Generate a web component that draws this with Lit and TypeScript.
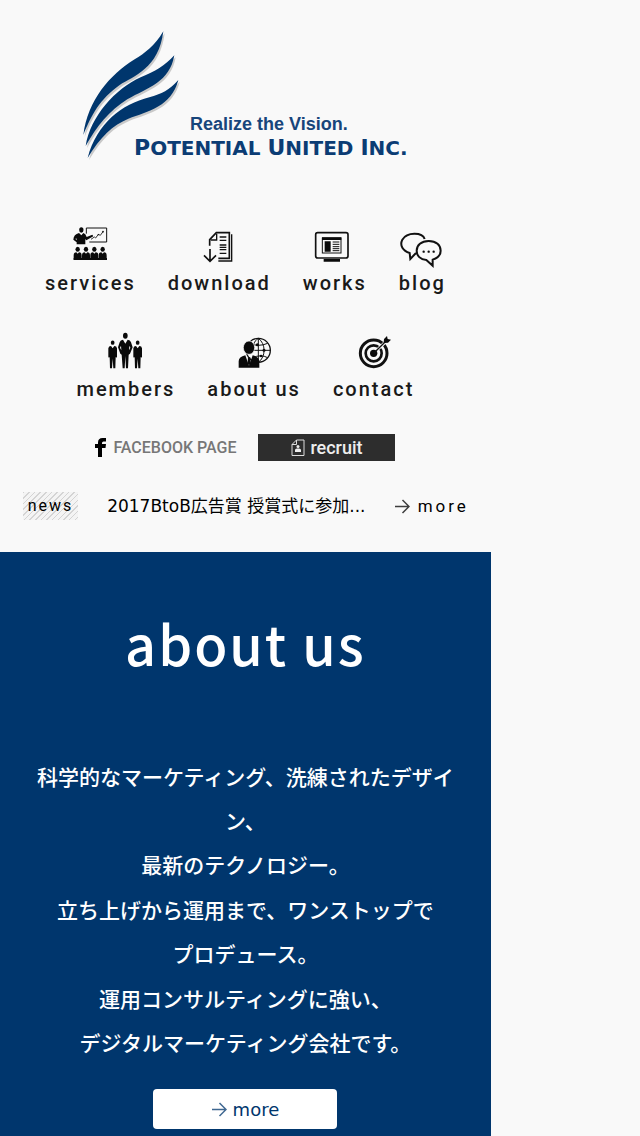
import { LitElement, html, svg, css } from "lit";
import { customElement } from "lit/decorators.js";

const person = (x: number, y: number) => svg`
  <ellipse cx=${x} cy=${y} rx="6.5" ry="7.5" />
  <path d="M${x - 12} ${y + 31} V${y + 19} Q${x - 12} ${y + 9} ${x - 4} ${y + 9} L${x} ${y + 13} L${x + 4} ${y + 9} Q${x + 12} ${y + 9} ${x + 12} ${y + 19} V${y + 31} Z" />`;

const standing = (x: number) => svg`
  <ellipse cx=${x} cy="65" rx="5.5" ry="6.5" />
  <path d="M${x - 5} 75 L${x} 82 L${x + 5} 75 Q${x + 12} 75 ${x + 13} 82 V107 Q${x + 12} 112 ${x + 9} 108 L${x + 8} 142 H${x + 2} L${x} 113 L${x - 2} 142 H${x - 8} L${x - 9} 108 Q${x - 12} 112 ${x - 13} 107 V82 Q${x - 12} 75 ${x - 5} 75 Z" />`;

const blades = svg`
  <path d="M281 34 C255 78 225 100 195 118 C120 165 55 240 41 345 C65 285 90 238 150 195 C190 170 268 145 281 34 Z" />
  <path d="M314 106 C285 137 257 155 213 172 C138 205 62 290 48 378 C82 318 119 272 173 238 C235 203 300 187 314 106 Z" />
  <path d="M326 180 C299 210 276 222 239 232 C157 253 82 309 54 414 C92 350 130 315 176 296 C235 274 305 260 326 180 Z" />`;

const icon = (viewBox: string, body: unknown) => html`
  <svg class="icon" viewBox=${viewBox} aria-hidden="true">${body}</svg>`;

const items = [
  {
    label: "services",
    icon: icon("120 33 126 120", svg`
      <path class="line" stroke-width="3" d="M172 39 H233 V81 H181 M172 39 V56" />
      <path class="line" stroke-width="2.5" d="M186 73 L196 66 L200 69 L208 58 L214 61 L222 50" />
      <circle cx="222" cy="50" r="2.5" /><circle cx="208" cy="59" r="2" />
      <ellipse cx="157" cy="45" rx="6.5" ry="8" />
      <path d="M150 54 L157 61 L163 54 Q170 56 173 66 L190 59 L193 64 L172 76 L169 72 V88 H143 V82 L133 74 Q134 58 150 54 Z M141 68 L140 73 L144 76 Z" fill-rule="evenodd" />
      ${person(146, 103)}${person(171, 103)}${person(196, 103)}${person(221, 103)}
      <path d="M134 129 H234 V135 H134 Z" />`),
  },
  {
    label: "download",
    icon: icon("507 33 126 120", svg`
      <path class="line" stroke-width="5" d="M542 92 V74 L562 53 H601 V130 H568" />
      <path class="line" stroke-width="4" d="M545 75 H563 V56 M608 58 V138 H568" />
      <path class="line" stroke-width="4" d="M572 66 H592 M572 76 H592 M572 90 H592 M572 97 H592 M572 104 H592 M572 115 H592" />
      <path class="line" stroke-width="5" d="M543 102 V137 M525 121 L543 139 L561 121" />`),
  },
  {
    label: "works",
    icon: icon("223 33 126 120", svg`
      <rect class="line" stroke-width="5" x="228" y="53" width="97" height="76" rx="6" />
      <rect class="line" stroke-width="3" x="248" y="69" width="56" height="45" />
      <path d="M247 67 H305 V75 H247 Z M255 79 H273 V110 H255 Z M252 132 H301 V140 H252 Z" />
      <path class="line" stroke-width="3" d="M279 81 H299 M279 88 H299 M279 95 H299 M279 101 H299 M279 107 H299" />`),
  },
  {
    label: "blog",
    icon: icon("484 33 126 120", svg`
      <path class="line" stroke-width="6" d="M555 72 C548 51 502 50 488 74 C479 92 490 108 510 114 L512 132 L529 114" />
      <path class="line" stroke-width="6" d="M567 78 C590 78 603 91 603 107 C603 120 594 129 579 134 L579 152 L560 135 C542 134 531 122 531 107 C531 91 545 78 567 78 Z" />
      <circle cx="552" cy="110" r="3.5" /><circle cx="567" cy="110" r="3.5" /><circle cx="582" cy="110" r="3.5" />`),
  },
  {
    label: "members",
    icon: icon("135 33 126 120", svg`
      ${standing(158)}${standing(233)}
      <ellipse cx="196" cy="44" rx="7" ry="9" />
      <path fill-rule="evenodd" d="M189 56 L196 68 L203 56 Q211 57 213 64 L218 79 L210 98 L206 101 L204 142 H198 L196 105 L194 142 H188 L185 101 L181 98 L174 79 L179 64 Q181 57 189 56 Z M183 74 L180 80 L184 88 Z M208 74 L211 80 L207 88 Z" />`),
  },
  {
    label: "about us",
    icon: icon("-24 33 126 120", svg`
      <circle class="line" stroke-width="4" cx="52" cy="88" r="36" />
      <path class="line" stroke-width="3" d="M52 52 V124 M34 88 H88 M52 52 C75 68 75 108 52 124 M52 52 C39 60 35 75 35 88 M24 67 Q52 79 80 67 M35 110 Q60 99 80 110" />
      <circle cx="49" cy="71" r="4.5" /><circle cx="69" cy="88" r="4.5" /><circle cx="60" cy="105" r="4" />
      <ellipse cx="24" cy="80" rx="17" ry="20" stroke="#f9f9f9" stroke-width="2" />
      <path fill-rule="evenodd" d="M-7 140 V121 Q-7 108 13 103 L24 134 L35 103 Q55 108 55 121 V140 Z" />
      <path d="M21 109 H28 L29 126 L24 134 L20 126 Z" />`),
  },
  {
    label: "contact",
    icon: icon("340 33 126 120", svg`
      <circle class="line" stroke-width="9" cx="402" cy="97" r="40" />
      <circle class="line" stroke-width="8" cx="402" cy="97" r="24" />
      <circle cx="402" cy="97" r="11" />
      <path stroke="#f9f9f9" stroke-width="9" d="M412 87 L436 64" />
      <path class="line" stroke-width="4" d="M402 97 L440 59" />
      <path d="M432 66 L433 54 L442 45 L444 54 L454 56 L445 65 Z" />`),
  },
];

const arrow = html`
  <svg class="arrow" viewBox="0 0 15 15" aria-hidden="true">
    <path d="M0 7.5 H14 M7.5 1 L14 7.5 L7.5 14" />
  </svg>`;

@customElement("app-root")
export class AppRoot extends LitElement {
  static styles = css`
    :host {
      display: flex;
      flex-direction: column;
      min-height: 100vh;
      background: #f9f9f9;
      color: #000;
      font-family: "DejaVu Sans", "Noto Sans CJK JP", sans-serif;
    }
    a { color: inherit; text-decoration: none; }
    svg { display: block; }
    .column { width: 76.7%; box-sizing: border-box; }
    .logo { display: flex; justify-content: center; padding-top: 30px; }
    .logo svg { width: 326px; height: 130px; }
    .mark { fill: #00366d; }
    .shade { fill: #c9c9c9; }
    .tagline { font: bold 18px "Liberation Sans", sans-serif; fill: #17457b; }
    .name { font: bold 20px "DejaVu Sans", sans-serif; fill: #0b3c74; }
    .cap { font-size: 22px; }
    .menu {
      display: flex;
      flex-wrap: wrap;
      justify-content: center;
      gap: 37px 32px;
      margin: 66px 0 0;
      padding: 0;
      list-style: none;
    }
    .item {
      display: flex;
      flex-direction: column;
      align-items: center;
      gap: 5px;
      font: 500 20px/24px Roboto, sans-serif;
      letter-spacing: 2px;
      color: #1a1a1a;
    }
    .icon { width: 42px; height: 40px; fill: #0a0a0a; overflow: visible; }
    .line { fill: none; stroke: #111; }
    .links {
      display: flex;
      justify-content: center;
      align-items: center;
      gap: 22px;
      margin-top: 33px;
    }
    .facebook {
      display: flex;
      align-items: center;
      gap: 7px;
      font: 500 16px/24px Roboto, sans-serif;
      color: #777;
    }
    .facebook svg { width: 11px; height: 19px; fill: #000; }
    .recruit {
      display: flex;
      align-items: center;
      justify-content: center;
      gap: 5px;
      width: 137px;
      height: 27px;
      background: #2d2d2d;
      color: #eee;
      font: 500 18px/24px Roboto, sans-serif;
    }
    .recruit svg { width: 14px; height: 18px; fill: #eee; }
    .recruit .outline { fill: none; stroke: #ddd; }
    .news {
      display: flex;
      align-items: center;
      justify-content: space-between;
      padding: 31px 22px 32px 23px;
    }
    .tag {
      width: 55px;
      margin: 0;
      background: repeating-linear-gradient(135deg, #d4d4d4 0 1px, #f4f4f4 1px 4px);
      font: 400 16px/28px Roboto, sans-serif;
      letter-spacing: 2px;
      text-align: center;
    }
    .headline { font-size: 17px; line-height: 28px; white-space: nowrap; }
    .more {
      display: flex;
      align-items: center;
      gap: 8px;
      font: 400 17px/28px Roboto, sans-serif;
      letter-spacing: 3px;
    }
    .arrow { width: 15px; height: 15px; fill: none; stroke: currentColor; stroke-width: 1.5; opacity: 0.75; }
    .about {
      flex: 1;
      display: flex;
      flex-direction: column;
      align-items: center;
      padding: 55px 30px 7px;
      background: #00366d;
      color: #fff;
      text-align: center;
    }
    .title {
      margin: 0;
      font: 500 54px/72px "Noto Sans CJK JP", sans-serif;
      letter-spacing: 2px;
    }
    .copy {
      display: flex;
      flex-direction: column;
      gap: 1px;
      margin: 75px 0 25px;
      font: 500 21px/44px "Noto Sans CJK JP", sans-serif;
    }
    .copy p { margin: 0; }
    .button {
      display: flex;
      align-items: center;
      justify-content: center;
      gap: 6px;
      width: 184px;
      height: 40px;
      border-radius: 4px;
      background: #fff;
      color: #00366d;
      font-size: 18px;
    }
  `;

  render() {
    return html`
      <header class="column">
        <a class="logo" href="#" aria-label="Potential United Inc.">
          <svg viewBox="0 0 326 130">
            <g transform="scale(.3333) translate(-37 -30)">
              <g class="shade" transform="translate(4 6)">${blades}</g>
              <g class="mark">${blades}</g>
            </g>
            <text class="tagline" x="108" y="100">Realize the Vision.</text>
            <text class="name" x="52" y="125"><tspan class="cap">P</tspan>OTENTIAL <tspan class="cap">U</tspan>NITED <tspan class="cap">I</tspan>NC.</text>
          </svg>
        </a>
        <nav>
          <ul class="menu">
            ${items.map((i) => html`<li><a class="item" href="#">${i.icon}<span>${i.label}</span></a></li>`)}
          </ul>
        </nav>
        <div class="links">
          <a class="facebook" href="#">
            <svg viewBox="0 0 11 19" aria-hidden="true">
              <path d="M3 19 V10 H0 V6 H3 V4.5 Q3 0 7.5 0 H11 V3.5 H8.5 Q7 3.5 7 5 V6 H11 L10.5 10 H7 V19 Z" />
            </svg>
            <span>FACEBOOK PAGE</span>
          </a>
          <a class="recruit" href="#">
            <svg viewBox="0 0 14 18" aria-hidden="true">
              <path class="outline" d="M5.5 1 H13 V16.5 H1 V5.5 Z M1 5.5 H5.5 V1" />
              <circle cx="7" cy="7.5" r="1.5" />
              <path d="M4 13 V11 Q4 9.5 6 9.5 H8 Q10 9.5 10 11 V13 Z" />
            </svg>
            <span>recruit</span>
          </a>
        </div>
      </header>
      <section class="column news">
        <h2 class="tag">news</h2>
        <a class="headline" href="#">2017BtoB広告賞 授賞式に参加...</a>
        <a class="more" href="#">${arrow}<span>more</span></a>
      </section>
      <section class="column about">
        <h1 class="title">about us</h1>
        <div class="copy">
          <p>科学的なマーケティング、洗練されたデザイン、<br />最新のテクノロジー。</p>
          <p>立ち上げから運用まで、ワンストップで<br />プロデュース。</p>
          <p>運用コンサルティングに強い、<br />デジタルマーケティング会社です。</p>
        </div>
        <a class="button" href="#">${arrow}<span>more</span></a>
      </section>
    `;
  }
}
